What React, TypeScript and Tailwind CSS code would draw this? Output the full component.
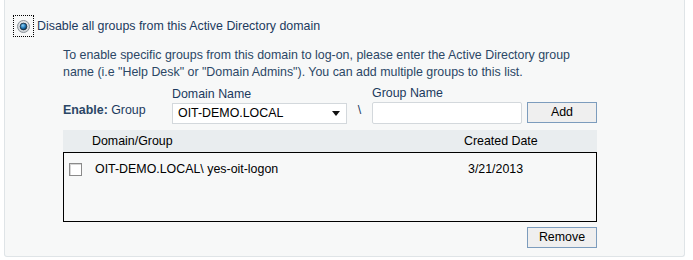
import { useState } from "react"

const font = { fontFamily: '"Liberation Sans", Arial, sans-serif' }

function Radio() {
  return (
    <div className="w-[21px] h-[22px] border border-dotted border-black flex items-center justify-center">
      <svg width="13" height="13" viewBox="0 0 13 13">
        <defs>
          <radialGradient id="ring" cx="50%" cy="40%" r="60%">
            <stop offset="0%" stopColor="#ffffff" />
            <stop offset="100%" stopColor="#c9ced3" />
          </radialGradient>
          <radialGradient id="dot" cx="40%" cy="35%" r="65%">
            <stop offset="0%" stopColor="#8fd0f5" />
            <stop offset="60%" stopColor="#1b74b4" />
            <stop offset="100%" stopColor="#0b3556" />
          </radialGradient>
        </defs>
        <circle cx="6.5" cy="6.5" r="6" fill="url(#ring)" stroke="#8b9298" strokeWidth="1" />
        <circle cx="6.5" cy="6.5" r="3.4" fill="url(#dot)" stroke="#1b2b3a" strokeWidth="0.8" />
      </svg>
    </div>
  )
}

export default function App() {
  const [group, setGroup] = useState("")

  return (
    <div className="w-[693px] h-[260px] bg-white text-[12.4px]" style={font}>
      <div className="ml-[4px] w-[681px] h-[257px] bg-[#f7f8f8] border-l border-r border-b border-[#dfe4e7] rounded-b-[3px] pt-[15px]">
        {/* option row */}
        <div className="flex items-center ml-[8px]">
          <Radio />
          <span className="ml-[3px] text-[#1c3a5e]">Disable all groups from this Active Directory domain</span>
        </div>

        <div className="ml-[58px] w-[535px]">
          <p className="mt-[10px] w-[528px] leading-[17px] text-[#2b4766]">
            To enable specific groups from this domain to log-on, please enter the Active Directory group name (i.e
            "Help Desk" or "Domain Admins"). You can add multiple groups to this list.
          </p>

          {/* entry row */}
          <div className="flex items-end mt-[5px]">
            <div className="w-[109px] pb-[4px] text-[#1c3a5e]">
              <b className="text-[#2b4766]">Enable:</b> Group
            </div>
            <div className="flex flex-col">
              <span className="text-[#1c3a5e] leading-[14px] mb-[2px]">Domain Name</span>
              <div className="w-[175px] h-[21px] bg-white border border-[#d3d8dc] flex items-center justify-between pl-[5px] pr-[6px] text-black">
                <span>OIT-DEMO.LOCAL</span>
                <svg width="8" height="5" viewBox="0 0 8 5">
                  <path d="M0 0 L8 0 L4 5 Z" fill="#111" />
                </svg>
              </div>
            </div>
            <span className="w-[25px] text-center pb-[4px] text-[#1c3a5e]">\</span>
            <div className="flex flex-col">
              <span className="text-[#1c3a5e] leading-[14px] mb-[2px]">Group Name</span>
              <input
                value={group}
                onChange={(e) => setGroup(e.target.value)}
                className="w-[150px] h-[22px] bg-white border border-[#d3d8dc] rounded-[2px] outline-none px-1"
              />
            </div>
            <button className="ml-[5px] mb-[1px] w-[70px] h-[21px] bg-[#efefef] border border-[#7c9cbd] text-black text-[12.4px]">
              Add
            </button>
          </div>

          {/* table */}
          <div className="mt-[6px] w-[534px]">
            <div className="h-[22px] bg-[#e9edef] flex items-center text-black">
              <span className="flex-1 pl-[29px]">Domain/Group</span>
              <span className="w-[133px]">Created Date</span>
            </div>
            <div className="h-[70px] border border-black">
              <div className="flex items-center mt-[7px]">
                <span className="ml-[5px] w-[13px] h-[13px] bg-white border border-[#8a8a8a] shadow-[inset_1px_1px_0_#d6d6d6]" />
                <span className="flex-1 ml-[13px] text-black">OIT-DEMO.LOCAL\ yes-oit-logon</span>
                <span className="w-[131px] pl-[3px] text-black">3/21/2013</span>
              </div>
            </div>
          </div>

          <div className="flex justify-end w-[534px] mt-[5px]">
            <button className="w-[70px] h-[21px] bg-[#efefef] border border-[#7c9cbd] text-black text-[12.4px]">
              Remove
            </button>
          </div>
        </div>
      </div>
    </div>
  )
}
